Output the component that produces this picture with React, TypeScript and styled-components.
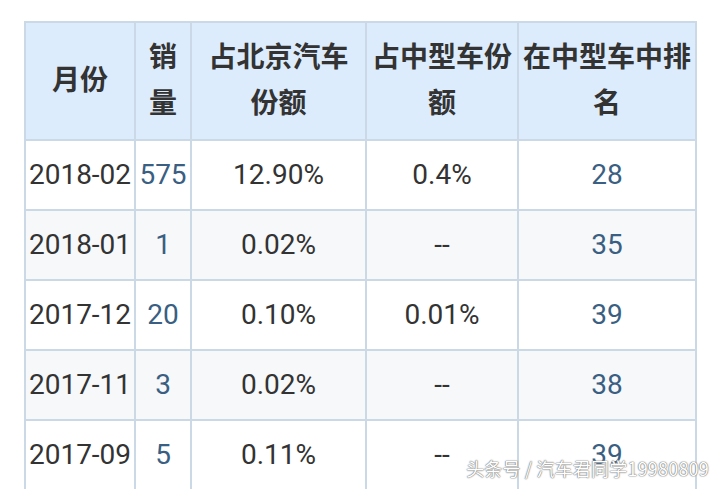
import React from 'react';
import styled, { createGlobalStyle } from 'styled-components';

const GlobalStyle = createGlobalStyle`
  html, body {
    margin: 0;
    padding: 0;
    background: #ffffff;
  }
  body {
    font-family: Roboto, "Noto Sans CJK SC", "Noto Sans", sans-serif;
    color: #333333;
  }
`;

const Page = styled.div`
  position: relative;
  width: 720px;
  height: 489px;
  overflow: hidden;
  padding: 21px 0 0 24px;
  box-sizing: border-box;
  background: #ffffff;
`;

const Table = styled.table`
  border-collapse: collapse;
  font-size: 28px;
`;

const HeadCell = styled.th<{ width: number }>`
  width: ${(p) => p.width - 10}px;
  min-width: ${(p) => p.width - 10}px;
  max-width: ${(p) => p.width - 10}px;
  background: #ddecfc;
  border: 2px solid #cbd9e6;
  padding: 12px 4px;
  line-height: 46px;
  font-weight: 700;
  color: #333333;
  text-align: center;
  white-space: nowrap;
`;

const Row = styled.tr<{ striped?: boolean }>`
  background: ${(p) => (p.striped ? '#f6f8fa' : '#ffffff')};
`;

const Cell = styled.td<{ blue?: boolean }>`
  border: 2px solid #cbd9e6;
  padding: 12px 2px;
  line-height: 44px;
  text-align: center;
  white-space: nowrap;
  color: ${(p) => (p.blue ? '#3a5f82' : '#333333')};
`;

const Watermark = styled.div`
  position: absolute;
  right: 11px;
  bottom: 8px;
  font-size: 18px;
  font-family: "Noto Sans CJK SC", Roboto, sans-serif;
  color: #ffffff;
  text-shadow: 0 0 1px #777777, 0 0 1px #777777, 0 0 2px #a0a0a0;
  letter-spacing: 0.2px;
`;

const columns = [
  { label: ['月份'], width: 110 },
  { label: ['销', '量'], width: 56 },
  { label: ['占北京汽车', '份额'], width: 175 },
  { label: ['占中型车份', '额'], width: 152 },
  { label: ['在中型车中排', '名'], width: 178 },
];

const rows = [
  ['2018-02', '575', '12.90%', '0.4%', '28'],
  ['2018-01', '1', '0.02%', '--', '35'],
  ['2017-12', '20', '0.10%', '0.01%', '39'],
  ['2017-11', '3', '0.02%', '--', '38'],
  ['2017-09', '5', '0.11%', '--', '39'],
];

const App = () => (
  <Page>
    <GlobalStyle />
    <Table>
      <thead>
        <tr>
          {columns.map((c, i) => (
            <HeadCell key={i} width={c.width}>
              {c.label.map((l, j) => (
                <React.Fragment key={j}>
                  {j > 0 && <br />}
                  {l}
                </React.Fragment>
              ))}
            </HeadCell>
          ))}
        </tr>
      </thead>
      <tbody>
        {rows.map((r, i) => (
          <Row key={i} striped={i % 2 === 1}>
            {r.map((v, j) => (
              <Cell key={j} blue={j === 1 || j === 4}>
                {v}
              </Cell>
            ))}
          </Row>
        ))}
      </tbody>
    </Table>
    <Watermark>头条号 / 汽车君同学19980809</Watermark>
  </Page>
);

export default App;
